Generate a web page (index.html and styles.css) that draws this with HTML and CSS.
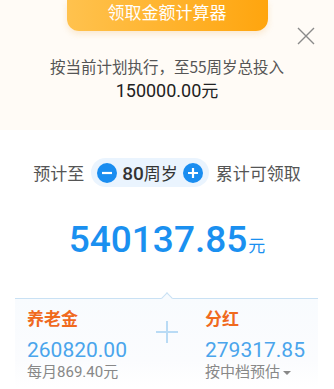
FILE: index.html
```html
<!DOCTYPE html>
<html lang="zh-CN">
<head>
    <meta charset="UTF-8">
    <meta name="viewport" content="width=device-width, initial-scale=1.0">
    <title>领取金额计算器</title>
    <link rel="stylesheet" href="styles.css">
</head>
<body>
    <div class="top">
        <div class="get-btn">领取金额计算器</div>
        <svg class="close" width="18" height="18" viewBox="0 0 18 18">
            <path d="M1 1 L17 17 M17 1 L1 17" stroke="#8a8a8a" stroke-width="1.4" fill="none"/>
        </svg>
        <p class="invest-text">按当前计划执行，至55周岁总投入</p>
        <p class="invest-sum"><span class="num">150000.00</span>元</p>
    </div>
    <div class="main">
        <div class="age-row">
            <span>预计至</span>
            <div class="age-pill">
                <svg class="round-btn" width="20" height="20" viewBox="0 0 20 20">
                    <circle cx="10" cy="10" r="10" fill="#1a8df0"/>
                    <path d="M5 10 H15" stroke="#fff" stroke-width="2.2"/>
                </svg>
                <span class="age"><span class="num">80</span>周岁</span>
                <svg class="round-btn" width="20" height="20" viewBox="0 0 20 20">
                    <circle cx="10" cy="10" r="10" fill="#1a8df0"/>
                    <path d="M5 10 H15 M10 5 V15" stroke="#fff" stroke-width="2.2"/>
                </svg>
            </div>
            <span>累计可领取</span>
        </div>
        <div class="total"><span class="num">540137.85</span><span class="unit">元</span></div>
        <div class="card">
            <div class="col">
                <div class="col-title">养老金</div>
                <div class="col-num num">260820.00</div>
                <div class="col-note">每月<span class="num">869.40</span>元</div>
            </div>
            <div class="plus">
                <svg width="22" height="22" viewBox="0 0 22 22">
                    <path d="M0 11 H22 M11 0 V22" stroke="#b9dbf5" stroke-width="2"/>
                </svg>
            </div>
            <div class="col col-right">
                <div class="col-title">分红</div>
                <div class="col-num num">279317.85</div>
                <div class="col-note">按中档预估<span class="caret"></span></div>
            </div>
        </div>
    </div>
</body>
</html>
```

FILE: styles.css
```css
body {
    margin: 0;
    padding: 0;
    background: #fff;
    font-family: "Noto Sans CJK SC", sans-serif;
    color: #333;
}
.num {
    font-family: Roboto, "Noto Sans CJK SC", sans-serif;
}
.top {
    position: relative;
    height: 130px;
    background: #fffbf6;
    overflow: hidden;
}
.get-btn {
    width: 201px;
    height: 31px;
    margin: 0 auto;
    box-sizing: border-box;
    padding-bottom: 7px;
    border-radius: 0 0 12px 12px;
    background: linear-gradient(90deg, #ffc24e, #ffa50e);
    box-shadow: 0 3px 6px rgba(230, 150, 40, 0.18);
    color: #fff;
    font-size: 17px;
    line-height: 24px;
    text-align: center;
}
.close {
    position: absolute;
    top: 27px;
    right: 19px;
}
.invest-text {
    margin: 23px 0 0;
    font-size: 15.5px;
    line-height: 24px;
    color: #555;
    text-align: center;
}
.invest-sum {
    margin: 0;
    font-size: 17px;
    line-height: 24px;
    color: #222;
    text-align: center;
}
.invest-sum .num {
    font-size: 18px;
}
.age-row {
    display: flex;
    align-items: center;
    justify-content: center;
    gap: 7px;
    margin-top: 28px;
    font-size: 17px;
    color: #555;
}
.age-pill {
    display: flex;
    align-items: center;
    gap: 5px;
    height: 29px;
    padding: 0 6px;
    border-radius: 15px;
    background: #eaf4fe;
}
.round-btn {
    display: block;
}
.age {
    color: #333;
    font-size: 17px;
}
.age .num {
    font-size: 19px;
    font-weight: 500;
}
.total {
    margin-top: 31px;
    text-align: center;
    color: #1a90f0;
    line-height: 44px;
}
.total .num {
    font-size: 37px;
    font-weight: 500;
}
.total .unit {
    font-size: 17px;
    margin-left: 1px;
}
.card {
    position: relative;
    display: grid;
    grid-template-columns: 128px 24px 1fr;
    margin: 31px 16px 0 15px;
    padding: 6px 0 6px 12px;
    border-top: 1.5px solid #c9e1f4;
    background: linear-gradient(#f8fbfe, #fbfcfe 70%, #fff);
}
.card::before {
    content: "";
    position: absolute;
    top: -5px;
    left: 148px;
    width: 7px;
    height: 7px;
    border-top: 1.5px solid #c9e1f4;
    border-left: 1.5px solid #c9e1f4;
    background: #f8fbfe;
    transform: rotate(45deg);
}
.col-right {
    padding-left: 26px;
}
.col-title {
    font-size: 17px;
    font-weight: 700;
    color: #f06a1e;
    line-height: 26px;
}
.col-num {
    margin-top: 6px;
    font-size: 21px;
    color: #4aa5ec;
    line-height: 26px;
}
.col-note {
    margin-top: -2px;
    font-size: 15px;
    color: #888;
    line-height: 20px;
}
.plus {
    display: flex;
    justify-content: center;
    padding-top: 16px;
}
.caret {
    display: inline-block;
    margin-left: 3px;
    vertical-align: middle;
    border-left: 4px solid transparent;
    border-right: 4px solid transparent;
    border-top: 4px solid #888;
}
```
